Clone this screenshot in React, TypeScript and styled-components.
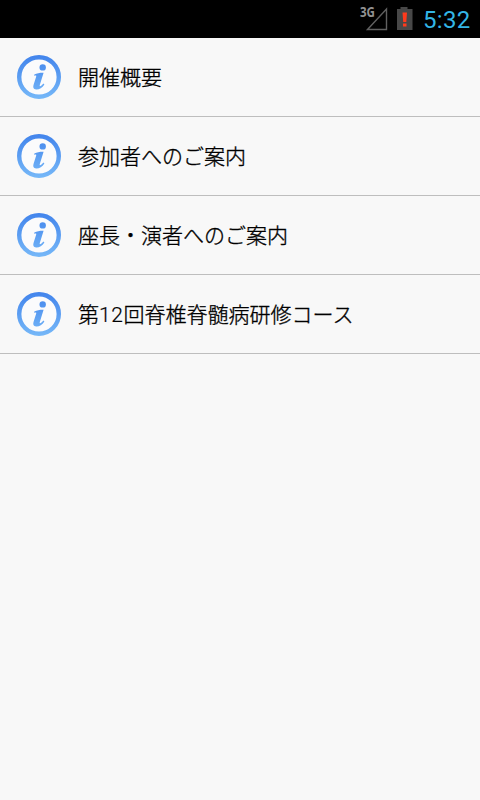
import React from "react";
import styled, { createGlobalStyle } from "styled-components";

const GlobalStyle = createGlobalStyle`
  html, body, #root { margin: 0; height: 100%; }
  body {
    background: #f8f8f8;
    font-family: Roboto, "Noto Sans CJK JP", sans-serif;
  }
`;

const Screen = styled.div`
  display: flex;
  flex-direction: column;
  width: 480px;
  height: 800px;
  background: #f8f8f8;
  overflow: hidden;
`;

const StatusBar = styled.header`
  display: flex;
  justify-content: flex-end;
  height: 38px;
  flex: none;
  box-sizing: border-box;
  padding-right: 9px;
  background: #000;
`;

const StatusIcons = styled.svg`
  display: block;
  width: 64px;
  height: 38px;
  margin-right: 5px;
`;

const Clock = styled.time`
  width: 48px;
  color: #33b5e5;
  font-size: 24px;
  letter-spacing: 0.3px;
  line-height: 40px;
  white-space: nowrap;
`;

const List = styled.ul`
  list-style: none;
  margin: 0;
  padding: 0;
`;

const Row = styled.li`
  display: flex;
  align-items: center;
  height: 78px;
  padding-left: 17px;
  border-bottom: 1px solid #bebebe;
`;

const InfoSvg = styled.svg`
  display: block;
  flex: none;
  width: 44px;
  height: 44px;
  margin-right: 17px;
`;

const Label = styled.span`
  padding-top: 2px;
  color: #000;
  font-size: 21px;
  font-weight: 300;
  line-height: 30px;
  white-space: nowrap;
  -webkit-text-stroke: 0.35px #000;
`;

const Digits = styled.span`
  letter-spacing: 0.6px;
  -webkit-text-stroke-width: 0.2px;
`;

const items = [
  "開催概要",
  "参加者へのご案内",
  "座長・演者へのご案内",
  "第12回脊椎脊髄病研修コース",
];

function InfoIcon({ id }: { id: string }) {
  return (
    <InfoSvg viewBox="0 0 44 44" aria-hidden="true">
      <defs>
        <linearGradient id={id} gradientUnits="userSpaceOnUse" x1="0" y1="0" x2="0" y2="44">
          <stop offset="0" stopColor="#4284ec" />
          <stop offset="1" stopColor="#76b8f8" />
        </linearGradient>
      </defs>
      <circle cx="22" cy="22" r="19.8" fill="#fbfbfc" stroke={`url(#${id})`} strokeWidth="4.4" />
      <circle cx="25.7" cy="12.4" r="3.2" fill={`url(#${id})`} />
      <path
        d="M17.3 19.6 C20.2 18 23.4 17.7 26.6 17.8 L22.8 30 C22.4 31.5 23.3 31.5 24.2 30.8 L26.5 28.6 L27.4 29.4 C25.1 32.8 22 34.8 19.1 34.5 C16.4 34.3 15.8 32.2 16.6 29.8 L19.2 21.5 C19.5 20.3 18.7 20.4 17.4 20.9 Z"
        fill={`url(#${id})`}
      />
    </InfoSvg>
  );
}

function LabelText({ text }: { text: string }) {
  return (
    <Label>
      {text
        .split(/(\d+)/)
        .map((part, i) => (/^\d+$/.test(part) ? <Digits key={i}>{part}</Digits> : part))}
    </Label>
  );
}

export default function App() {
  return (
    <Screen>
      <GlobalStyle />
      <StatusBar>
        <StatusIcons viewBox="0 0 64 38" aria-hidden="true">
          <text
            x="6"
            y="17"
            fill="#929292"
            fontFamily="Open Sans"
            fontSize="13.5"
            fontWeight="700"
            textLength="15"
            lengthAdjust="spacingAndGlyphs"
          >
            3G
          </text>
          <path d="M13.5 29.5 L32.5 9 V29.5 Z" fill="none" stroke="#606060" strokeWidth="1.4" />
          <path d="M46.5 7 H53.5 V9 H58.5 V30 H43 V9 H46.5 Z" fill="#484848" />
          <path d="M48.5 12.5 H53 L52.3 22 H49.2 Z M49 23.5 H52.5 V26.5 H49 Z" fill="#ff3a1c" />
        </StatusIcons>
        <Clock>5:32</Clock>
      </StatusBar>
      <List>
        {items.map((label, index) => (
          <Row key={label}>
            <InfoIcon id={`info-${index}`} />
            <LabelText text={label} />
          </Row>
        ))}
      </List>
    </Screen>
  );
}
